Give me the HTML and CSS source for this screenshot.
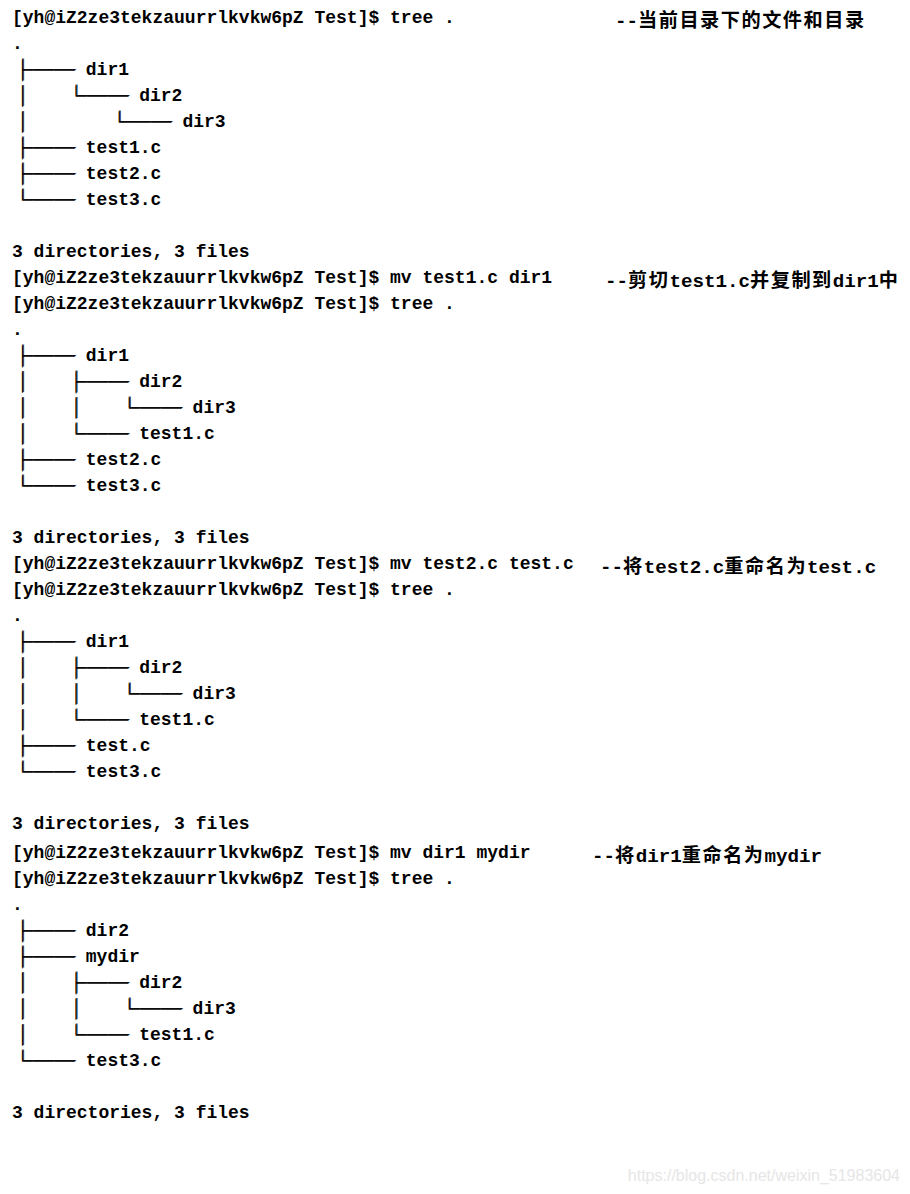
FILE: index.html
```html
<!DOCTYPE html>
<html lang="zh-CN">
<head>
<meta charset="utf-8">
<title>tree mv</title>
<link rel="stylesheet" href="styles.css">
</head>
<body>
<div class="page">
  <div class="term">
    <div class="row"><span class="cmd">[yh@iZ2ze3tekzauurrlkvkw6pZ Test]$ tree .</span><span class="note n1">--<span class="cj">当前目录下的文件和目录</span></span></div>
    <div class="ln">.</div>
    <div class="ln"><span class="b">├──</span> dir1</div>
    <div class="ln"><span class="b">│</span>   <span class="b">└──</span> dir2</div>
    <div class="ln"><span class="b">│</span>       <span class="b">└──</span> dir3</div>
    <div class="ln"><span class="b">├──</span> test1.c</div>
    <div class="ln"><span class="b">├──</span> test2.c</div>
    <div class="ln"><span class="b">└──</span> test3.c</div>
    <div class="ln"> </div>
    <div class="ln">3 directories, 3 files</div>
    <div class="row"><span class="cmd">[yh@iZ2ze3tekzauurrlkvkw6pZ Test]$ mv test1.c dir1</span><span class="note n2">--<span class="cj">剪切</span>test1.c<span class="cj">并复制到</span>dir1<span class="cj">中</span></span></div>
    <div class="ln">[yh@iZ2ze3tekzauurrlkvkw6pZ Test]$ tree .</div>
    <div class="ln">.</div>
    <div class="ln"><span class="b">├──</span> dir1</div>
    <div class="ln"><span class="b">│</span>   <span class="b">├──</span> dir2</div>
    <div class="ln"><span class="b">│</span>   <span class="b">│</span>   <span class="b">└──</span> dir3</div>
    <div class="ln"><span class="b">│</span>   <span class="b">└──</span> test1.c</div>
    <div class="ln"><span class="b">├──</span> test2.c</div>
    <div class="ln"><span class="b">└──</span> test3.c</div>
    <div class="ln"> </div>
    <div class="ln">3 directories, 3 files</div>
    <div class="row"><span class="cmd">[yh@iZ2ze3tekzauurrlkvkw6pZ Test]$ mv test2.c test.c</span><span class="note n3">--<span class="cj">将</span>test2.c<span class="cj">重命名为</span>test.c</span></div>
    <div class="ln">[yh@iZ2ze3tekzauurrlkvkw6pZ Test]$ tree .</div>
    <div class="ln">.</div>
    <div class="ln"><span class="b">├──</span> dir1</div>
    <div class="ln"><span class="b">│</span>   <span class="b">├──</span> dir2</div>
    <div class="ln"><span class="b">│</span>   <span class="b">│</span>   <span class="b">└──</span> dir3</div>
    <div class="ln"><span class="b">│</span>   <span class="b">└──</span> test1.c</div>
    <div class="ln"><span class="b">├──</span> test.c</div>
    <div class="ln"><span class="b">└──</span> test3.c</div>
    <div class="ln"> </div>
    <div class="ln">3 directories, 3 files</div>
    <div class="row shift"><span class="cmd">[yh@iZ2ze3tekzauurrlkvkw6pZ Test]$ mv dir1 mydir</span><span class="note n4">--<span class="cj">将</span>dir1<span class="cj">重命名为</span>mydir</span></div>
    <div class="ln">[yh@iZ2ze3tekzauurrlkvkw6pZ Test]$ tree .</div>
    <div class="ln">.</div>
    <div class="ln"><span class="b">├──</span> dir2</div>
    <div class="ln"><span class="b">├──</span> mydir</div>
    <div class="ln"><span class="b">│</span>   <span class="b">├──</span> dir2</div>
    <div class="ln"><span class="b">│</span>   <span class="b">│</span>   <span class="b">└──</span> dir3</div>
    <div class="ln"><span class="b">│</span>   <span class="b">└──</span> test1.c</div>
    <div class="ln"><span class="b">└──</span> test3.c</div>
    <div class="ln"> </div>
    <div class="ln">3 directories, 3 files</div>
  </div>
  <div class="watermark">https://blog.csdn.net/weixin_51983604</div>
</div>
</body>
</html>
```

FILE: styles.css
```css
html, body {
  margin: 0;
  padding: 0;
  background: #ffffff;
}

.page {
  position: relative;
  min-height: 1194px;
  box-sizing: border-box;
  color: #000000;
  font-family: "Liberation Mono", "Noto Sans CJK SC", monospace;
  font-size: 18px;
}

.term {
  padding: 5px 0 0 12px;
}

.ln {
  height: 26px;
  line-height: 26px;
  white-space: pre;
  font-weight: bold;
}

.row {
  display: flex;
  align-items: flex-start;
  height: 26px;
  line-height: 26px;
  white-space: pre;
  font-weight: bold;
}

.row.shift {
  margin-top: 3px;
}

.cmd {
  flex: 0 0 580px;
}

.b {
  font-family: "Noto Sans CJK SC", sans-serif;
  font-size: 21px;
  font-weight: bold;
  line-height: 0;
  vertical-align: -2px;
  text-shadow: 1px 0 0 #000000, 0 0.5px 0 #000000;
}

.note {
  margin-top: 1px;
  font-size: 19.2px;
  font-weight: bold;
  line-height: 26px;
}

.cj {
  font-family: "Noto Sans CJK SC", sans-serif;
  letter-spacing: 1.5px;
}

.n1 { padding-left: 23px; }
.n2 { padding-left: 13px; }
.n3 { padding-left: 8px; }
.n4 { padding-left: 0; }

.watermark {
  position: absolute;
  right: 10px;
  bottom: 8px;
  font-family: "Liberation Sans", Arial, sans-serif;
  font-size: 16px;
  line-height: 20px;
  color: #e6e6e6;
}
```
